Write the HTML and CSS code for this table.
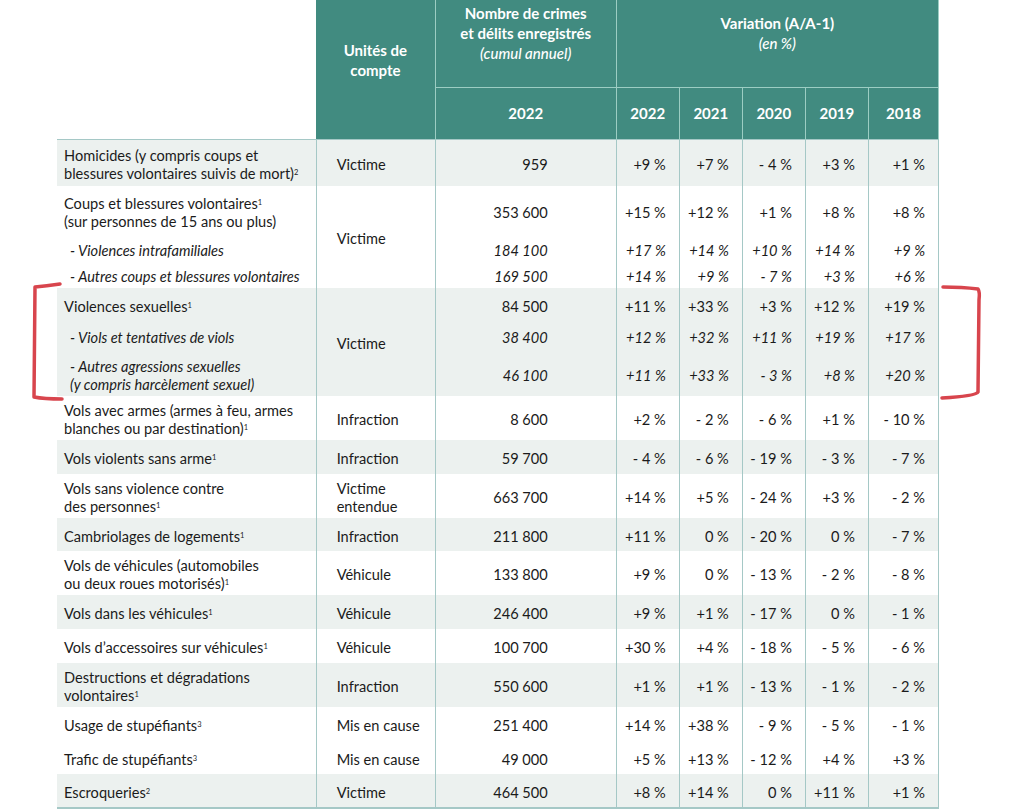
FILE: index.html
```html
<!DOCTYPE html>
<html lang="fr">
<head>
<meta charset="utf-8">
<title>Crimes et délits enregistrés</title>
<link rel="stylesheet" href="styles.css">
</head>
<body>
<div class="page">
<table class="stats">
  <colgroup>
    <col class="c-label"><col class="c-unit"><col class="c-count">
    <col class="c-var"><col class="c-var"><col class="c-var"><col class="c-var"><col class="c-var-last">
  </colgroup>
  <thead>
    <tr class="h1">
      <th rowspan="2" class="blank"></th>
      <th rowspan="2" class="unit-h">Unités de<br>compte</th>
      <th class="count-h">Nombre de crimes<br>et délits enregistrés<br><em>(cumul annuel)</em></th>
      <th colspan="5" class="var-h">Variation (A/A-1)<br><em>(en %)</em></th>
    </tr>
    <tr class="h2">
      <th class="count-h">2022</th>
      <th>2022</th><th>2021</th><th>2020</th><th>2019</th><th>2018</th>
    </tr>
  </thead>
  <tbody>
    <tr class="alt r-first">
      <td class="label">Homicides (y compris coups et<br>blessures volontaires suivis de mort)<sup>2</sup></td>
      <td class="unit">Victime</td><td class="num">959</td>
      <td class="pct">+9&nbsp;%</td><td class="pct">+7&nbsp;%</td><td class="pct">-&nbsp;4&nbsp;%</td><td class="pct">+3&nbsp;%</td><td class="pct">+1&nbsp;%</td>
    </tr>

    <tr class="r-main50">
      <td class="label">Coups et blessures volontaires<sup>1</sup><br>(sur personnes de 15 ans ou plus)</td>
      <td class="unit" rowspan="3">Victime</td><td class="num">353 600</td>
      <td class="pct">+15&nbsp;%</td><td class="pct">+12&nbsp;%</td><td class="pct">+1&nbsp;%</td><td class="pct">+8&nbsp;%</td><td class="pct">+8&nbsp;%</td>
    </tr>
    <tr class="sub r-sub26">
      <td class="label"><span class="indent">- Violences intrafamiliales</span></td>
      <td class="num">184 100</td>
      <td class="pct">+17&nbsp;%</td><td class="pct">+14&nbsp;%</td><td class="pct">+10&nbsp;%</td><td class="pct">+14&nbsp;%</td><td class="pct">+9&nbsp;%</td>
    </tr>
    <tr class="sub r-sub26">
      <td class="label"><span class="indent">- Autres coups et blessures volontaires</span></td>
      <td class="num">169 500</td>
      <td class="pct">+14&nbsp;%</td><td class="pct">+9&nbsp;%</td><td class="pct">-&nbsp;7&nbsp;%</td><td class="pct">+3&nbsp;%</td><td class="pct">+6&nbsp;%</td>
    </tr>

    <tr class="alt r-33">
      <td class="label">Violences sexuelles<sup>1</sup></td>
      <td class="unit" rowspan="3">Victime</td><td class="num">84 500</td>
      <td class="pct">+11&nbsp;%</td><td class="pct">+33&nbsp;%</td><td class="pct">+3&nbsp;%</td><td class="pct">+12&nbsp;%</td><td class="pct">+19&nbsp;%</td>
    </tr>
    <tr class="alt sub r-30">
      <td class="label"><span class="indent">- Viols et tentatives de viols</span></td>
      <td class="num">38 400</td>
      <td class="pct">+12&nbsp;%</td><td class="pct">+32&nbsp;%</td><td class="pct">+11&nbsp;%</td><td class="pct">+19&nbsp;%</td><td class="pct">+17&nbsp;%</td>
    </tr>
    <tr class="alt sub r-45">
      <td class="label"><span class="indent">- Autres agressions sexuelles<br>(y compris harcèlement sexuel)</span></td>
      <td class="num">46 100</td>
      <td class="pct">+11&nbsp;%</td><td class="pct">+33&nbsp;%</td><td class="pct">-&nbsp;3&nbsp;%</td><td class="pct">+8&nbsp;%</td><td class="pct">+20&nbsp;%</td>
    </tr>

    <tr class="r-two">
      <td class="label">Vols avec armes (armes à feu, armes<br>blanches ou par destination)<sup>1</sup></td>
      <td class="unit">Infraction</td><td class="num">8 600</td>
      <td class="pct">+2&nbsp;%</td><td class="pct">-&nbsp;2&nbsp;%</td><td class="pct">-&nbsp;6&nbsp;%</td><td class="pct">+1&nbsp;%</td><td class="pct">-&nbsp;10&nbsp;%</td>
    </tr>
    <tr class="alt r-one">
      <td class="label">Vols violents sans arme<sup>1</sup></td>
      <td class="unit">Infraction</td><td class="num">59 700</td>
      <td class="pct">-&nbsp;4&nbsp;%</td><td class="pct">-&nbsp;6&nbsp;%</td><td class="pct">-&nbsp;19&nbsp;%</td><td class="pct">-&nbsp;3&nbsp;%</td><td class="pct">-&nbsp;7&nbsp;%</td>
    </tr>
    <tr class="r-two">
      <td class="label">Vols sans violence contre<br>des personnes<sup>1</sup></td>
      <td class="unit">Victime<br>entendue</td><td class="num">663 700</td>
      <td class="pct">+14&nbsp;%</td><td class="pct">+5&nbsp;%</td><td class="pct">-&nbsp;24&nbsp;%</td><td class="pct">+3&nbsp;%</td><td class="pct">-&nbsp;2&nbsp;%</td>
    </tr>
    <tr class="alt r-one short">
      <td class="label">Cambriolages de logements<sup>1</sup></td>
      <td class="unit">Infraction</td><td class="num">211 800</td>
      <td class="pct">+11&nbsp;%</td><td class="pct">0&nbsp;%</td><td class="pct">-&nbsp;20&nbsp;%</td><td class="pct">0&nbsp;%</td><td class="pct">-&nbsp;7&nbsp;%</td>
    </tr>
    <tr class="r-two">
      <td class="label">Vols de véhicules (automobiles<br>ou deux roues motorisés)<sup>1</sup></td>
      <td class="unit">Véhicule</td><td class="num">133 800</td>
      <td class="pct">+9&nbsp;%</td><td class="pct">0&nbsp;%</td><td class="pct">-&nbsp;13&nbsp;%</td><td class="pct">-&nbsp;2&nbsp;%</td><td class="pct">-&nbsp;8&nbsp;%</td>
    </tr>
    <tr class="alt r-one">
      <td class="label">Vols dans les véhicules<sup>1</sup></td>
      <td class="unit">Véhicule</td><td class="num">246 400</td>
      <td class="pct">+9&nbsp;%</td><td class="pct">+1&nbsp;%</td><td class="pct">-&nbsp;17&nbsp;%</td><td class="pct">0&nbsp;%</td><td class="pct">-&nbsp;1&nbsp;%</td>
    </tr>
    <tr class="r-one">
      <td class="label">Vols d’accessoires sur véhicules<sup>1</sup></td>
      <td class="unit">Véhicule</td><td class="num">100 700</td>
      <td class="pct">+30&nbsp;%</td><td class="pct">+4&nbsp;%</td><td class="pct">-&nbsp;18&nbsp;%</td><td class="pct">-&nbsp;5&nbsp;%</td><td class="pct">-&nbsp;6&nbsp;%</td>
    </tr>
    <tr class="alt r-two">
      <td class="label">Destructions et dégradations<br>volontaires<sup>1</sup></td>
      <td class="unit">Infraction</td><td class="num">550 600</td>
      <td class="pct">+1&nbsp;%</td><td class="pct">+1&nbsp;%</td><td class="pct">-&nbsp;13&nbsp;%</td><td class="pct">-&nbsp;1&nbsp;%</td><td class="pct">-&nbsp;2&nbsp;%</td>
    </tr>
    <tr class="r-one">
      <td class="label">Usage de stupéfiants<sup>3</sup></td>
      <td class="unit">Mis en cause</td><td class="num">251 400</td>
      <td class="pct">+14&nbsp;%</td><td class="pct">+38&nbsp;%</td><td class="pct">-&nbsp;9&nbsp;%</td><td class="pct">-&nbsp;5&nbsp;%</td><td class="pct">-&nbsp;1&nbsp;%</td>
    </tr>
    <tr class="r-one short">
      <td class="label">Trafic de stupéfiants<sup>3</sup></td>
      <td class="unit">Mis en cause</td><td class="num">49 000</td>
      <td class="pct">+5&nbsp;%</td><td class="pct">+13&nbsp;%</td><td class="pct">-&nbsp;12&nbsp;%</td><td class="pct">+4&nbsp;%</td><td class="pct">+3&nbsp;%</td>
    </tr>
    <tr class="alt r-one r-last">
      <td class="label">Escroqueries<sup>2</sup></td>
      <td class="unit">Victime</td><td class="num">464 500</td>
      <td class="pct">+8&nbsp;%</td><td class="pct">+14&nbsp;%</td><td class="pct">0&nbsp;%</td><td class="pct">+11&nbsp;%</td><td class="pct">+1&nbsp;%</td>
    </tr>
  </tbody>
</table>

<svg class="marks" width="1024" height="810" viewBox="0 0 1024 810" aria-hidden="true">
  <path d="M60 284 Q46 286 35 287 L34 397 Q44 399 62 399" />
  <path d="M943 287 Q962 287 978 289 Q980 292 979 300 L978 392 Q976 396 942 398" />
</svg>
</div>
</body>
</html>
```

FILE: styles.css
```css
* { box-sizing: border-box; }

html, body {
  margin: 0;
  padding: 0;
  background: #ffffff;
}

body {
  font-family: Lato, "Liberation Sans", sans-serif;
  color: #1b1b1b;
}

.page {
  position: relative;
  width: 1024px;
  height: 810px;
  overflow: hidden;
}

.stats {
  margin-top: -20px;
  margin-left: 57px;
  width: 882px;
  border-collapse: collapse;
  table-layout: fixed;
  font-size: 14.6px;
  line-height: 18px;
}

col.c-label { width: 259px; }
col.c-unit { width: 119px; }
col.c-count { width: 181px; }
col.c-var { width: 63px; }
col.c-var-last { width: 70px; }

/* header */
thead th {
  background: #418b80;
  color: #ffffff;
  font-weight: 700;
  font-size: 15px;
  line-height: 20px;
  text-align: center;
  vertical-align: middle;
  padding: 0;
  border-left: 1px solid #9ccdc3;
  border-right: 1px solid #9ccdc3;
}

thead th em {
  font-weight: 500;
}

thead th.blank {
  background: transparent;
  border: none;
}

thead th.unit-h {
  border-left: none;
  padding-top: 2px;
}

.h1 { height: 107px; }
.h1 th.count-h,
.h1 th.var-h { border-bottom: 1px solid #9ccdc3; }
.h2 { height: 52px; }

/* body */
tbody td {
  padding: 4px 0 0 0;
  vertical-align: middle;
  border-left: 1px solid #a5c8c6;
  border-right: 1px solid #a5c8c6;
  white-space: nowrap;
}

tbody tr.alt td { background: #ecf1ef; }

tbody td.label {
  border-left: none;
  padding-left: 7px;
}

tbody tr.sub td { font-style: italic; }
tbody tr.sub td.label .indent {
  display: inline-block;
  padding-left: 6px;
}

tbody td.unit { padding-left: 20px; }

tbody td.num {
  text-align: right;
  padding-right: 68px;
}

tbody td.pct {
  text-align: right;
  padding-right: 13px;
}

tbody tr.r-first td { border-top: 1px solid #a5c8c6; }
tbody tr.r-last td { border-bottom: 2px solid #a5c8c6; }

sup {
  font-size: 7.5px;
  line-height: 0;
  vertical-align: 4px;
}

tr.r-first { height: 47px; }
tr.r-main50 { height: 50px; }
tr.r-sub26 { height: 26px; }
tr.r-33 { height: 33px; }
tr.r-30 { height: 30px; }
tr.r-45 { height: 45px; }
tr.r-two { height: 44px; }
tr.r-one { height: 34px; }
tr.r-one.short { height: 33px; }

/* hand-drawn annotation brackets */
.marks {
  position: absolute;
  top: 0;
  left: 0;
  pointer-events: none;
}

.marks path {
  fill: none;
  stroke: #d8454d;
  stroke-width: 3.5;
  stroke-linecap: round;
  stroke-linejoin: round;
}
```
